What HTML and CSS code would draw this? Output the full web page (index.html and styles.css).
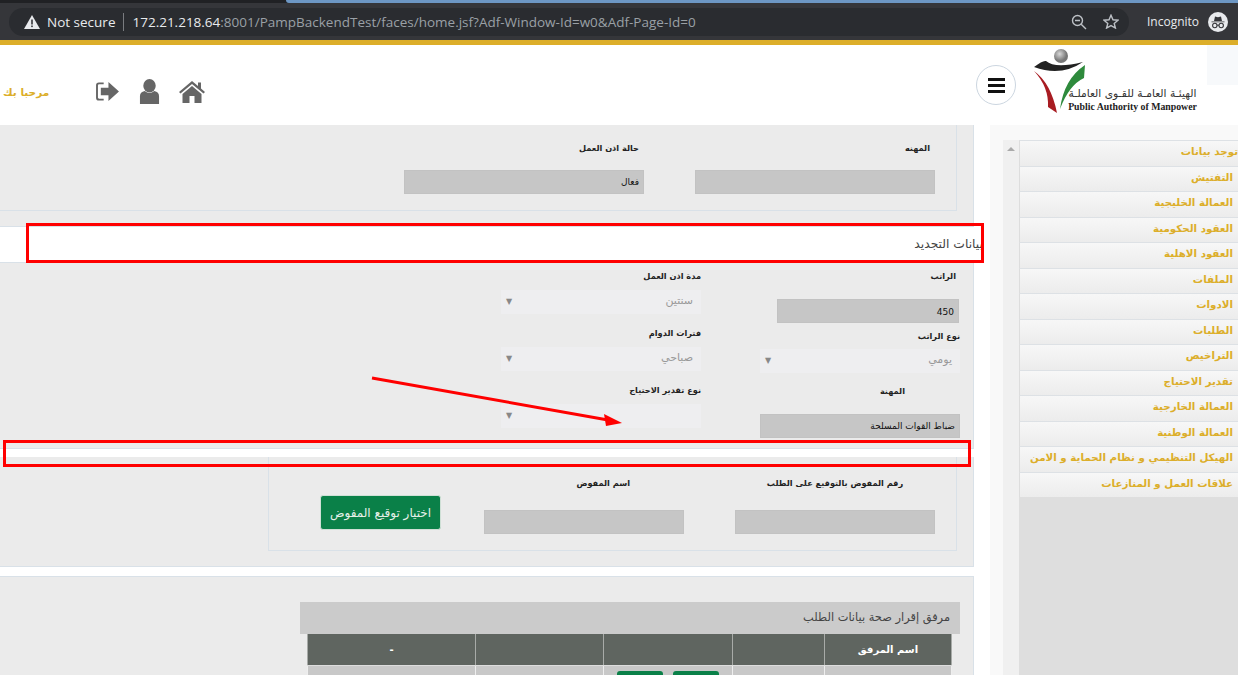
FILE: index.html
```html
<!DOCTYPE html>
<html lang="ar">
<head>
    <meta charset="UTF-8">
    <meta name="viewport" content="width=device-width, initial-scale=1.0">
    <title>Public Authority of Manpower</title>
    <link rel="stylesheet" href="styles.css">
</head>
<body>

    <!-- browser toolbar -->
    <div class="tabstrip"><div class="tab-blue"></div></div>
    <div class="toolbar" dir="ltr">
        <div class="omnibox">
            <svg class="warn" width="16" height="14" viewBox="0 0 16 14"><path d="M8 0 L16 14 L0 14 Z" fill="#e8eaed"/><rect x="7.2" y="4.5" width="1.6" height="5" fill="#35363a"/><rect x="7.2" y="10.5" width="1.6" height="1.6" fill="#35363a"/></svg>
            <span class="secure">Not secure</span>
            <span class="sep"></span>
            <span class="url"><b>172.21.218.64</b>:8001/PampBackendTest/faces/home.jsf?Adf-Window-Id=w0&amp;Adf-Page-Id=0</span>
            <svg class="zoom-icon" width="16" height="16" viewBox="0 0 16 16" fill="none" stroke="#bdc1c6" stroke-width="1.4"><circle cx="6.5" cy="6.5" r="5"/><path d="M4 6.5 H9 M10.2 10.2 L15 15"/></svg>
            <svg class="star-icon" width="16" height="15" viewBox="0 0 16 15" fill="none" stroke="#bdc1c6" stroke-width="1.4"><path d="M8 1.2 L10 5.8 L15 6.2 L11.2 9.4 L12.4 14 L8 11.6 L3.6 14 L4.8 9.4 L1 6.2 L6 5.8 Z"/></svg>
        </div>
        <span class="incognito">Incognito</span>
        <svg class="spy" width="20" height="20" viewBox="0 0 20 20"><circle cx="10" cy="10" r="10" fill="#e8eaed"/><path d="M3.5 9.5 H16.5 V10.3 H3.5 Z M6 9 L7 4.5 L10 5.2 L13 4.5 L14 9 Z" fill="#35363a"/><circle cx="6.8" cy="13.5" r="2.2" fill="none" stroke="#35363a" stroke-width="1.1"/><circle cx="13.2" cy="13.5" r="2.2" fill="none" stroke="#35363a" stroke-width="1.1"/><path d="M9 13.2 H11" stroke="#35363a"/></svg>
    </div>

    <header class="top">
        <div class="user-side">
            <span class="welcome">مرحبا بك</span>
            <div class="top-icons">
                <svg width="25" height="21" viewBox="0 0 26 22" fill="#666"><path d="M9 1.5 H4 Q1 1.5 1 4.5 V17.5 Q1 20.5 4 20.5 H9 V18.5 H4.2 Q3 18.5 3 17.3 V4.7 Q3 3.5 4.2 3.5 H9 Z"/><path d="M6 7 H14 V1 L25 11 L14 21 V15 H6 Z"/></svg>
                <svg width="21" height="25" viewBox="0 0 22 26" fill="#666"><ellipse cx="11" cy="7" rx="6.5" ry="7"/><path d="M1 26 V18 Q1 13.500 6 12.500 Q11 16.500 16 12.500 Q21 13.500 21 18 V26 Z"/></svg>
                <svg width="26" height="22" viewBox="0 0 26 22" fill="#666"><path d="M13 0 L19 5 V1.500 H22 V7.500 L26 11 L24.500 12.500 L13 3 L1.500 12.500 L0 11 Z"/><path d="M13 5 L22.500 13 V22 H15.500 V15 H10.500 V22 H3.500 V13 Z"/></svg>
            </div>
        </div>
        <div class="brand">
            <button class="burger"><span></span><span></span><span></span></button>
            <div class="logo">
                <svg class="logo-mark" width="56" height="66" viewBox="0 0 56 66">
                    <defs><radialGradient id="ball" cx="40%" cy="35%"><stop offset="0" stop-color="#d8d8d8"/><stop offset="1" stop-color="#777"/></radialGradient></defs>
                    <circle cx="28" cy="7" r="7" fill="url(#ball)"/>
                    <path d="M1 18 Q10 11 13 12 Q22 20 50 13 Q28 28 1 18 Z" fill="#222"/>
                    <path d="M1 22 Q18 34 24 64 L15 58 Q16 38 1 22 Z" fill="#a81c22"/>
                    <path d="M52 16 L51 29 Q36 36 27 60 Q31 30 52 16 Z" fill="#2e8a3c"/>
                </svg>
                <div class="logo-text">
                    <span class="logo-ar">الهيئـة العامـة للقـوى العاملـة</span>
                    <span class="logo-en" dir="ltr">Public Authority of Manpower</span>
                </div>
            </div>
            <div class="corner"></div>
        </div>
    </header>

    <div class="main">
        <aside class="side">
            <nav class="menu">
                <a class="first">توجد بيانات</a>
                <a>التفتيش</a>
                <a>العمالة الخليجية</a>
                <a>العقود الحكومية</a>
                <a>العقود الاهلية</a>
                <a>الملفات</a>
                <a>الادوات</a>
                <a>الطلبات</a>
                <a>التراخيص</a>
                <a>تقدير الاحتياج</a>
                <a>العمالة الخارجية</a>
                <a>العمالة الوطنية</a>
                <a>الهيكل التنظيمي و نظام الحماية و الامن</a>
                <a>علاقات العمل و المنازعات</a>
            </nav>
            <div class="scroll"><span class="up"></span></div>
        </aside>

        <div class="content">
            <section class="panel panel-one">
                <div class="box box-one">
                    <div class="field wide">
                        <label>المهنه</label>
                        <div class="input"></div>
                    </div>
                    <div class="field wide">
                        <label>حالة اذن العمل</label>
                        <div class="input">فعال</div>
                    </div>
                </div>
            </section>

            <h2 class="strip">بيانات التجديد</h2>

            <section class="panel renew">
                <div class="renew-col col-right">
                    <label class="l-salary">الراتب</label>
                    <div class="input salary">450</div>
                    <label class="l-type">نوع الراتب</label>
                    <div class="select">يومي</div>
                    <label class="l-job">المهنة</label>
                    <div class="input job">ضباط القوات المسلحة</div>
                </div>
                <div class="renew-col col-left">
                    <label>مدة اذن العمل</label>
                    <div class="select">سنتين</div>
                    <label>فترات الدوام</label>
                    <div class="select">صباحي</div>
                    <label>نوع تقدير الاحتياج</label>
                    <div class="select"></div>
                </div>
            </section>

            <div class="thin-strip"></div>

            <section class="panel panel-auth">
                <div class="box box-auth">
                    <div class="field auth">
                        <label class="centered">رقم المفوض بالتوقيع على الطلب</label>
                        <div class="input"></div>
                    </div>
                    <div class="field auth">
                        <label class="name-label">اسم المفوض</label>
                        <div class="input"></div>
                    </div>
                    <button class="pick">اختيار توقيع المفوض</button>
                </div>
            </section>

            <section class="panel panel-files">
                <div class="files">
                    <h3>مرفق إقرار صحة بيانات الطلب</h3>
                    <table>
                        <tr><th class="c1">اسم المرفق</th><th class="c2"></th><th class="c3"></th><th class="c4"></th><th class="c5">-</th></tr>
                        <tr><td></td><td></td><td><span class="mini"></span><span class="mini"></span></td><td></td><td></td></tr>
                    </table>
                </div>
            </section>
        </div>
    </div>

    <!-- annotations drawn over the screenshot -->
    <div class="mark mark-one"></div>
    <div class="mark mark-two"></div>
    <svg class="arrow" width="270" height="60" viewBox="0 0 270 60"><path d="M2 2 L238 44" stroke="#f00" stroke-width="3"/><path d="M252 47 L234 38 L236 50 Z" fill="#f00"/></svg>

</body>
</html>
```

FILE: styles.css
```css
* { box-sizing: border-box; }
html, body { margin: 0; height: 675px; overflow: hidden; }
body { position: relative; direction: rtl; background: white; font-family: "DejaVu Sans", sans-serif; font-size: 9px; color: #222; }

/* browser toolbar */
.tabstrip { height: 3px; background: #202124; direction: ltr; }
.tab-blue { margin-left: 286px; height: 3px; background: #6d97c4; border-bottom-left-radius: 3px; }
.toolbar { height: 37px; background: #35363a; display: flex; align-items: center; padding: 0 10px 0 9px; font-family: "Open Sans", "Liberation Sans", sans-serif; }
.omnibox { flex: none; width: 1120px; height: 28px; border-radius: 14px; background: #2a2c30; display: flex; align-items: center; padding: 0 10px 0 15px; font-size: 14px; color: #e8eaed; }
.secure { margin-left: 7px; font-size: 13.5px; }
.sep { width: 1px; height: 18px; margin: 0 8px; background: #7a7c80; }
.url { color: #9aa0a6; font-size: 13.5px; flex: 1; white-space: nowrap; }
.url b { color: #e8eaed; font-weight: 400; }
.zoom-icon { margin-right: 16px; }
.incognito { color: #e8eaed; font-size: 12px; margin-left: 18px; }
.spy { margin-left: 9px; flex: none; }

/* site header */
.top { height: 85px; border-top: 5px solid #dcae2a; background: white; display: flex; justify-content: space-between; flex-direction: row-reverse; }
.user-side { display: flex; flex-direction: row-reverse; align-items: center; padding: 13px 0 0 3px; gap: 46px; }
.welcome { color: #dcae2a; font-weight: bold; font-size: 10.5px; white-space: nowrap; }
.top-icons { display: flex; flex-direction: row-reverse; gap: 19px; align-items: center; }
.brand { display: flex; flex-direction: row-reverse; align-items: flex-start; }
.burger { width: 40px; height: 40px; margin: 20px 17px 0 0; border: 1px solid #ccd6e0; border-radius: 50%; background: white; display: flex; flex-direction: column; justify-content: center; align-items: center; gap: 3px; padding: 0; }
.burger span { width: 17px; height: 3px; background: #111; }
.logo { position: relative; width: 164px; height: 70px; margin-top: 3px; }
.logo-mark { position: absolute; left: 0; top: 1px; }
.logo-text { position: absolute; left: 35px; right: 0; top: 38px; display: flex; flex-direction: column; text-align: center; color: #333; white-space: nowrap; }
.logo-ar { font-size: 10.7px; line-height: 15px; }
.logo-en { font-family: "Liberation Serif", serif; font-weight: bold; font-size: 9.8px; line-height: 11px; color: #222; }
.corner { width: 31px; height: 40px; margin-left: 10px; background: #f7f9fb; }

/* layout */
.main { display: flex; height: 550px; overflow: hidden; }
.content { width: 974px; margin-right: 16px; }

/* side menu */
.side { width: 248px; display: flex; background: #f9f9f9; padding-left: 13px; }
.menu { width: 219px; margin-top: 15px; background: #dedede; }
.menu a { display: block; height: 25.5px; line-height: 21px; padding-right: 5px; white-space: nowrap; color: #dcae2a; font-size: 10.3px; font-weight: bold; border-top: 1px solid #dde1e5; border-left: 1px solid #ddd; background: linear-gradient(#f7f7f7, #ececec); }
.menu a.first { padding-right: 0; }
.scroll { width: 16px; margin-top: 15px; background: #f0f0f0; padding-top: 7px; display: flex; justify-content: center; align-items: flex-start; }
.up { width: 0; height: 0; border: 4px solid transparent; border-top: 0; border-bottom: 4px solid #aaa; }

/* form bits */
.panel { background: #ebebeb; border-right: 1px solid #d9e1e8; }
label { display: block; font-weight: bold; font-size: 8.2px; color: #222; white-space: nowrap; }
.input { height: 24px; background: #c6c6c6; border: 1px solid #c2c2c2; font-size: 9px; line-height: 22px; padding-right: 4px; color: #111; }
.select { height: 24px; width: 200px; background: #eeeef0; color: #999; font-size: 11px; line-height: 22px; padding-right: 8px; position: relative; }
.select::after { content: "▼"; position: absolute; left: 5px; top: 1px; font-size: 8px; color: #888; }

.panel-one { height: 102px; border-bottom: 1px solid #d9e1e8; }
.box-one { width: 957px; height: 86px; margin-right: 16px; display: flex; gap: 51px; padding: 16px 21px 0 0; border-right: 1px solid #d9e1e8; border-bottom: 1px solid #d9e1e8; }
.field.wide { width: 240px; }
.wide label { padding: 2px 5px 0 0; height: 29px; }

.strip { height: 35px; margin: 0 -9px 0 0; background: white; font-weight: 400; font-size: 12.3px; line-height: 34px; color: #444; }

.renew { height: 187px; display: flex; padding-right: 13px; border-top: 1px solid #d9e1e8; border-bottom: 1px solid #d9e1e8; gap: 59px; }
.renew-col { width: 200px; }
.col-left { padding-top: 7px; }
.col-left label { height: 20px; padding-top: 1px; }
.col-left .select { margin-bottom: 13px; }
.col-right { padding-top: 8px; }
.l-salary { height: 14px; margin: 0 4px 14px 0; }
.salary { width: 182px; margin: 0 1px 8px 0; line-height: 24px; }
.l-type { height: 18px; }
.col-right .select { margin-bottom: 13px; }
.l-job { height: 14px; margin: 2px 55px 14px 0; }
.job { width: 200px; }

.thin-strip { height: 8px; background: white; }

.panel-auth { height: 110px; border-bottom: 1px solid #d9e1e8; }
.box-auth { width: 689px; height: 94px; margin-right: 16px; display: flex; gap: 51px; padding: 21px 21px 0 0; border-left: 1px solid #d9e1e8; border-right: 1px solid #d9e1e8; border-bottom: 1px solid #d9e1e8; }
.field.auth { width: 200px; }
.auth label { height: 32px; }
.centered { text-align: center; }
.name-label { padding-right: 54px; }
.pick { width: 121px; height: 35px; margin: 17px -8px 0 0; background: #0a8048; border: 1px solid #cfe0d6; border-radius: 3px; color: #e6f0ea; font: 12px "DejaVu Sans", sans-serif; padding: 0; white-space: nowrap; }

/* attachments table */
.panel-files { height: 100px; margin-top: 9px; padding-top: 25px; border-top: 1px solid #d9e1e8; }
.files { width: 660px; margin-right: 13px; }
.files h3 { height: 32px; margin: 0; padding-right: 10px; background: #cbcbcb; font-weight: 400; font-size: 11.4px; line-height: 30px; color: #444; }
table { width: 644px; margin: 0 8px; border-collapse: collapse; table-layout: fixed; background: #c8c8c8; }
th { height: 31px; background: #5f6560; color: white; font-size: 10px; border-right: 1px solid #a8aba8; border-left: 1px solid #a8aba8; border-bottom: 1px solid #ddd; }
td { height: 11px; background: #c8c8c8; border-right: 1px solid #eee; border-left: 1px solid #eee; vertical-align: top; padding: 5px 0 0; text-align: center; line-height: 0; }
.c1 { width: 127px; }
.c2 { width: 92px; }
.c3 { width: 129px; }
.c4 { width: 128px; }
.c5 { width: 168px; }
.mini { display: inline-block; width: 46px; height: 6px; margin: 0 5px; background: #0a8048; border-radius: 3px 3px 0 0; }

/* red annotations */
.mark { position: absolute; border: 3px solid #f00; }
.mark-one { left: 26px; top: 223px; width: 958px; height: 40px; }
.mark-two { left: 3px; top: 440px; width: 968px; height: 27px; }
.arrow { position: absolute; left: 370px; top: 376px; }
```
